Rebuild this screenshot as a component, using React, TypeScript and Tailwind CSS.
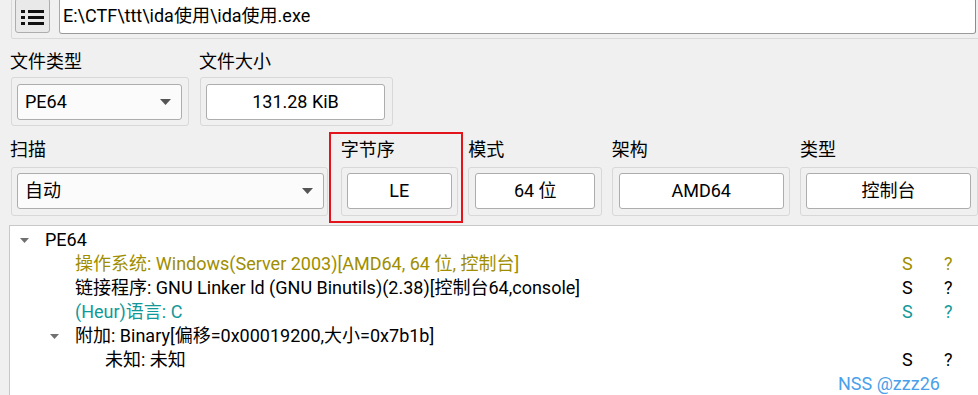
import React from "react";

const Tri = ({ w = 9, h = 5, c = "#707070" }: { w?: number; h?: number; c?: string }) => (
  <svg width={w} height={h} viewBox={`0 0 ${w} ${h}`}>
    <polygon points={`0,0 ${w},0 ${w / 2},${h}`} fill={c} />
  </svg>
);

const Combo = ({ text, w }: { text: string; w: string }) => (
  <div className={`${w} h-[36px] bg-[#fbfbfb] border border-[#adadad] rounded-[3px] flex items-center pl-[7px] pr-[10px]`}>
    <span className="flex-1 leading-[22px]">{text}</span>
    <Tri w={11} h={6} c="#555555" />
  </div>
);

const Val = ({ text, w }: { text: string; w: string }) => (
  <div className={`${w} h-[36px] bg-white border border-[#adadad] rounded-[3px] flex items-center justify-center leading-[22px]`}>
    {text}
  </div>
);

type Row = { level: number; open?: boolean; text: string; color?: string; s?: boolean };

const rows: Row[] = [
  { level: 0, open: true, text: "PE64" },
  { level: 1, text: "操作系统: Windows(Server 2003)[AMD64, 64 位, 控制台]", color: "text-[#9e8e00]", s: true },
  { level: 1, text: "链接程序: GNU Linker ld (GNU Binutils)(2.38)[控制台64,console]", color: "text-black", s: true },
  { level: 1, text: "(Heur)语言: C", color: "text-[#119999]", s: true },
  { level: 1, open: true, text: "附加: Binary[偏移=0x00019200,大小=0x7b1b]" },
  { level: 2, text: "未知: 未知", color: "text-black", s: true },
];

export default function App() {
  return (
    <div className="w-[978px] h-[395px] overflow-hidden bg-[#f0f0f0] relative flex flex-col font-['Roboto','Noto_Sans_CJK_SC',sans-serif] text-[18px] text-black">
      {/* top bar */}
      <div className="-mt-[6px] ml-[11px] -mr-[10px] h-[45px] shrink-0 border border-[#d9d9d9] rounded-[2px] flex items-end gap-[9px] pl-[3px] pb-[4px]">
        <div className="w-[35px] h-[35px] mb-[1px] bg-[#e9e9e9] border border-[#adadad] rounded-[3px] flex flex-col items-center justify-center gap-[3px] pt-[4px]">
          {[0, 1, 2].map((i) => (
            <div key={i} className="flex gap-[3px]">
              <div className="w-[4px] h-[3px] bg-[#111]" />
              <div className="w-[16px] h-[3px] bg-[#111]" />
            </div>
          ))}
        </div>
        <div className="w-[917px] h-[36px] bg-white border border-[#a8a8a8] border-r-[#8c8c8c] border-b-[#9a9a9a] rounded-[3px] flex items-center pl-[3px] leading-[22px]">
          E:\CTF\ttt\ida使用\ida使用.exe
        </div>
      </div>

      {/* row 1 */}
      <div className="flex shrink-0">
        <div className="ml-[11px] w-[178px] flex flex-col">
          <div className="h-[38px] pt-[12px] leading-[21px] -ml-[1px]">文件类型</div>
          <div className="h-[49px] border border-[#d8d8d8] rounded-[3px] pt-[6px] pl-[5px]">
            <Combo text="PE64" w="w-[165px]" />
          </div>
        </div>
        <div className="ml-[11px] w-[193px] flex flex-col">
          <div className="h-[38px] pt-[12px] leading-[21px] -ml-[1px]">文件大小</div>
          <div className="h-[49px] border border-[#d8d8d8] rounded-[3px] pt-[6px] pl-[5px]">
            <Val text="131.28 KiB" w="w-[179px]" />
          </div>
        </div>
      </div>

      {/* row 2 */}
      <div className="flex shrink-0">
        <div className="ml-[11px] w-[318px] flex flex-col">
          <div className="h-[41px] pt-[13px] leading-[21px] -ml-[1px]">扫描</div>
          <div className="h-[49px] border border-[#d8d8d8] rounded-[3px] pt-[5px] pl-[5px]">
            <Combo text="自动" w="w-[307px]" />
          </div>
        </div>
        <div className="ml-[13px] w-[118px] flex flex-col relative">
          <div className="h-[41px] pt-[13px] leading-[21px]">字节序</div>
          <div className="h-[49px] border border-[#d8d8d8] rounded-[3px] pt-[5px] pl-[5px]">
            <Val text="LE" w="w-[105px]" />
          </div>
          <div className="absolute left-[-12px] top-[6px] w-[134px] h-[91px] border-2 border-[#e3141c]" />
        </div>
        <div className="ml-[10px] w-[134px] flex flex-col">
          <div className="h-[41px] pt-[13px] leading-[21px]">模式</div>
          <div className="h-[49px] border border-[#d8d8d8] rounded-[3px] pt-[5px] pl-[6px]">
            <Val text="64 位" w="w-[120px]" />
          </div>
        </div>
        <div className="ml-[10px] w-[179px] flex flex-col">
          <div className="h-[41px] pt-[13px] leading-[21px]">架构</div>
          <div className="h-[49px] border border-[#d8d8d8] rounded-[3px] pt-[5px] pl-[6px]">
            <Val text="AMD64" w="w-[165px]" />
          </div>
        </div>
        <div className="ml-[10px] w-[178px] shrink-0 flex flex-col">
          <div className="h-[41px] pt-[13px] leading-[21px]">类型</div>
          <div className="h-[49px] border border-[#d8d8d8] rounded-[3px] pt-[5px] pl-[5px]">
            <Val text="控制台" w="w-[165px]" />
          </div>
        </div>
      </div>

      {/* tree */}
      <div className="mt-[9px] ml-[9px] flex-1 bg-white border-t border-l border-[#c8c8c8] pt-[2px]">
        {rows.map((r, i) => (
          <div key={i} className={`h-[24px] flex items-center ${r.color ?? ""}`}>
            <div style={{ width: 30 * r.level }} className="shrink-0" />
            <div className="w-[35px] shrink-0 pl-[10px] flex items-center">
              {r.open ? <Tri /> : null}
            </div>
            <div className="flex-1 whitespace-nowrap leading-[24px]">{r.text}</div>
            <div className="w-[42px] shrink-0 leading-[24px]">{r.s ? "S" : ""}</div>
            <div className="w-[34px] shrink-0 leading-[24px]">{r.s ? "?" : ""}</div>
          </div>
        ))}
      </div>

      <div className="absolute left-[838px] top-[373px] text-[18px] leading-[22px] text-[#4aa0ea]">NSS @zzz26</div>
    </div>
  );
}
